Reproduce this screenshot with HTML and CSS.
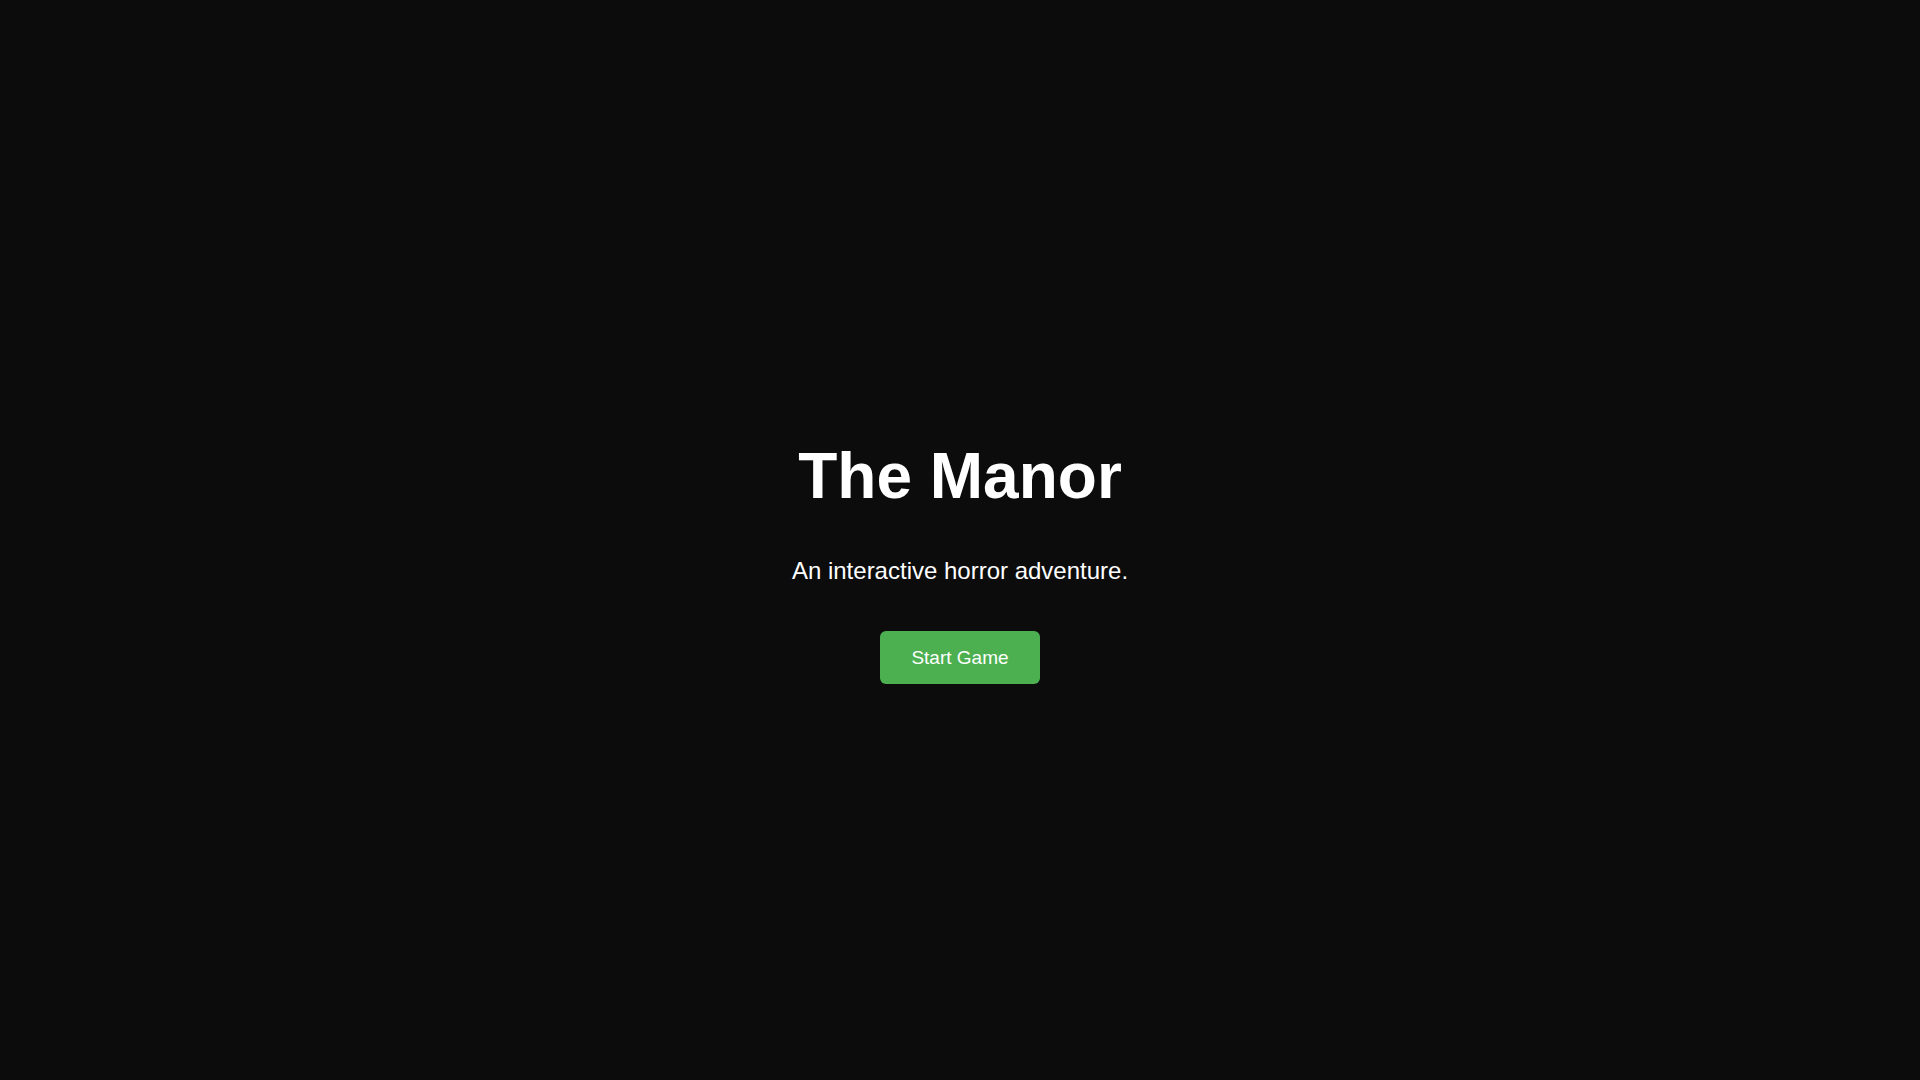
FILE: index.html
```html
<!DOCTYPE html>
<html lang="en">
<head>
<meta charset="utf-8">
<title>The Manor</title>
<link rel="stylesheet" href="styles.css">
</head>
<body>
<main class="screen">
  <div class="intro">
    <h1 class="title">The Manor</h1>
    <p class="tagline">An interactive horror adventure.</p>
    <button class="start-btn" type="button">Start Game</button>
  </div>
</main>
</body>
</html>
```
FILE: styles.css
```css
html, body {
  margin: 0;
  height: 100%;
}
body {
  background: #0c0c0c;
  color: #ffffff;
  font-family: "Liberation Sans", Arial, sans-serif;
}
.screen {
  height: 100vh;
  display: flex;
  align-items: center;
  justify-content: center;
}
.intro {
  display: flex;
  flex-direction: column;
  align-items: center;
  text-align: center;
}
.title {
  font-size: 64px;
  font-weight: bold;
  margin: 43px 0 0;
  line-height: 74px;
}
.tagline {
  font-size: 24px;
  margin: 44px 0 0;
  line-height: 28px;
}
.start-btn {
  margin-top: 46px;
  background: #4caf50;
  color: #ffffff;
  border: none;
  border-radius: 6px;
  font-family: "Liberation Sans", Arial, sans-serif;
  font-size: 19px;
  line-height: 22px;
  width: 160px;
  height: 53px;
  padding: 0;
  cursor: pointer;
}
```
